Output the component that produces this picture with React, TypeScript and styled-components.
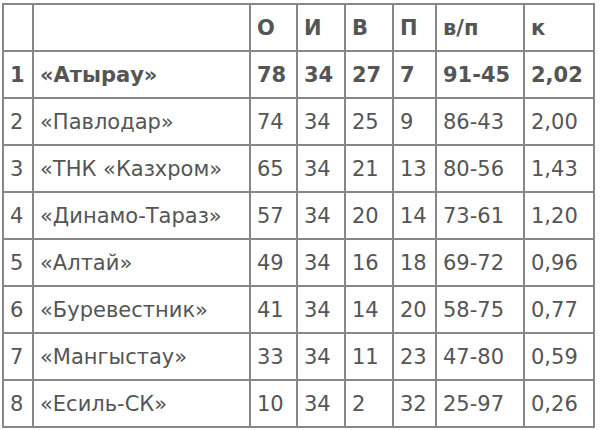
import React from "react";
import styled, { createGlobalStyle } from "styled-components";

const GlobalStyle = createGlobalStyle`
  html, body {
    margin: 0;
    padding: 0;
    background: #ffffff;
  }
`;

const Page = styled.div`
  padding: 3px 0 0 2px;
`;

const Table = styled.table`
  border-collapse: separate;
  border-spacing: 0;
  table-layout: fixed;
  width: 593px;
  border-left: 2px solid #878787;
  border-top: 2px solid #878787;
  font-family: "DejaVu Sans", Verdana, sans-serif;
  font-size: 21px;
  color: #555555;
`;

const Cell = styled.td<{ $bold?: boolean }>`
  height: 45px;
  padding: 0 0 0 6px;
  border-right: 2px solid #878787;
  border-bottom: 2px solid #878787;
  vertical-align: middle;
  text-align: left;
  white-space: nowrap;
  overflow: hidden;
  font-weight: ${(p) => (p.$bold ? 700 : 400)};
`;

const widths = [30, 217, 47, 48, 48, 43, 88, 70];
const head = ["", "", "О", "И", "В", "П", "в/п", "к"];

const rows = [
  ["1", "«Атырау»", "78", "34", "27", "7", "91-45", "2,02"],
  ["2", "«Павлодар»", "74", "34", "25", "9", "86-43", "2,00"],
  ["3", "«ТНК «Казхром»", "65", "34", "21", "13", "80-56", "1,43"],
  ["4", "«Динамо-Тараз»", "57", "34", "20", "14", "73-61", "1,20"],
  ["5", "«Алтай»", "49", "34", "16", "18", "69-72", "0,96"],
  ["6", "«Буревестник»", "41", "34", "14", "20", "58-75", "0,77"],
  ["7", "«Мангыстау»", "33", "34", "11", "23", "47-80", "0,59"],
  ["8", "«Есиль-СК»", "10", "34", "2", "32", "25-97", "0,26"],
];

export default function App() {
  return (
    <Page>
      <GlobalStyle />
      <Table>
        <colgroup>
          {widths.map((w, i) => (
            <col key={i} style={{ width: w }} />
          ))}
        </colgroup>
        <tbody>
          <tr>
            {head.map((h, i) => (
              <Cell key={i} $bold>
                {h}
              </Cell>
            ))}
          </tr>
          {rows.map((r, ri) => (
            <tr key={ri}>
              {r.map((c, ci) => (
                <Cell key={ci} $bold={ri === 0}>
                  {c}
                </Cell>
              ))}
            </tr>
          ))}
        </tbody>
      </Table>
    </Page>
  );
}
